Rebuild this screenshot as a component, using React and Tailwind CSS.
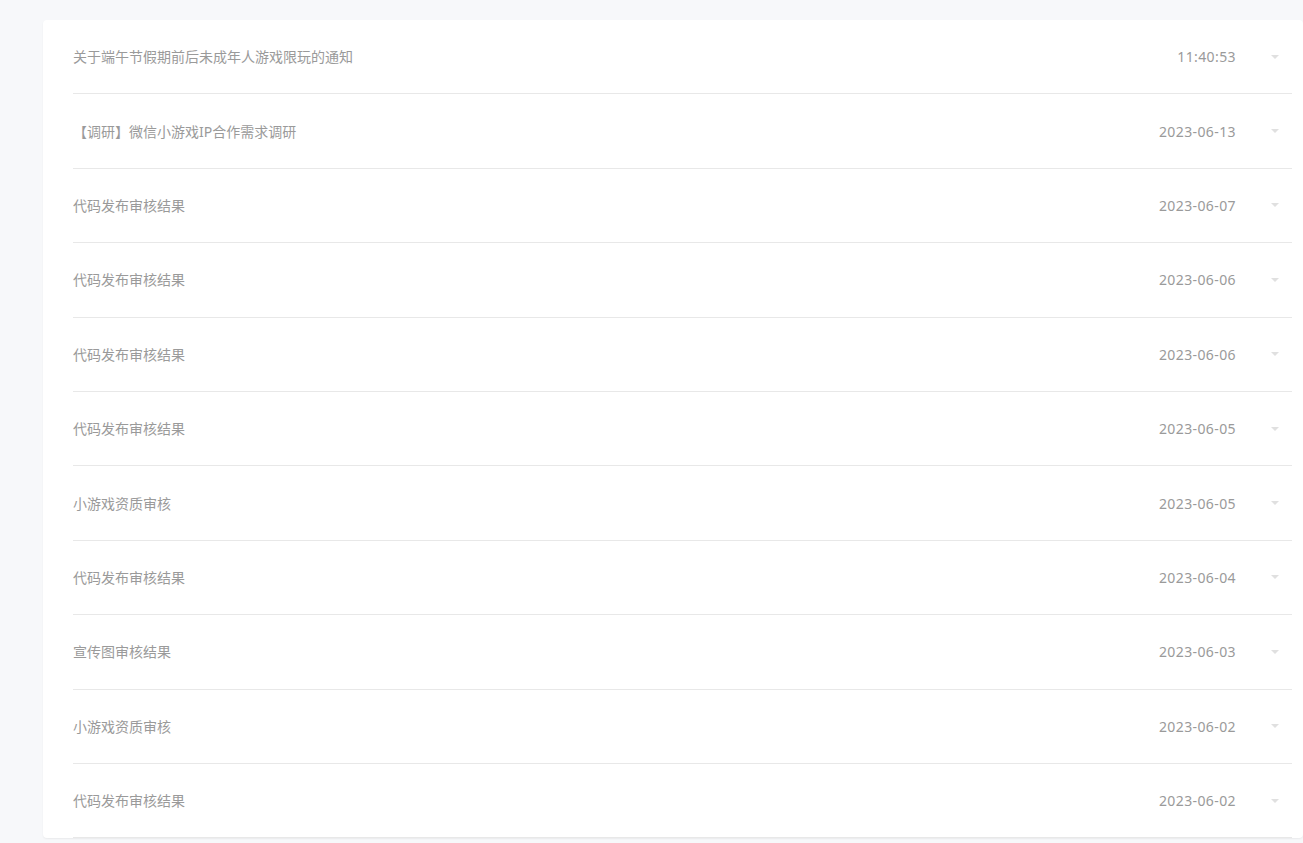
const notices = [
  { title: "关于端午节假期前后未成年人游戏限玩的通知", time: "11:40:53" },
  { title: "【调研】微信小游戏IP合作需求调研", time: "2023-06-13" },
  { title: "代码发布审核结果", time: "2023-06-07" },
  { title: "代码发布审核结果", time: "2023-06-06" },
  { title: "代码发布审核结果", time: "2023-06-06" },
  { title: "代码发布审核结果", time: "2023-06-05" },
  { title: "小游戏资质审核", time: "2023-06-05" },
  { title: "代码发布审核结果", time: "2023-06-04" },
  { title: "宣传图审核结果", time: "2023-06-03" },
  { title: "小游戏资质审核", time: "2023-06-02" },
  { title: "代码发布审核结果", time: "2023-06-02" },
];

function Caret() {
  return (
    <svg width="8" height="4" viewBox="0 0 8 4" className="ml-[35px] mr-[13px] shrink-0">
      <path d="M0 0 L8 0 L4 4 Z" fill="#e0e0e0" />
    </svg>
  );
}

export default function App() {
  return (
    <div
      className="min-h-screen overflow-hidden bg-[#f7f8fa] pt-[20px]"
      style={{ fontFamily: '"Noto Sans", "Noto Sans CJK SC", sans-serif' }}
    >
      <div className="ml-[43px] rounded-[4px] bg-white pl-[30px] pr-[11px] shadow-[0_1px_2px_rgba(0,0,0,0.06)]">
        {notices.map((item, i) => (
          <div
            key={i}
            className="flex h-[74.4px] items-center border-b border-[#e8e8e8] text-[14px] text-[#9a9a9a]"
          >
            <span className="flex-1 truncate">{item.title}</span>
            <span className="shrink-0 tracking-[0.4px]">{item.time}</span>
            <Caret />
          </div>
        ))}
      </div>
    </div>
  );
}
